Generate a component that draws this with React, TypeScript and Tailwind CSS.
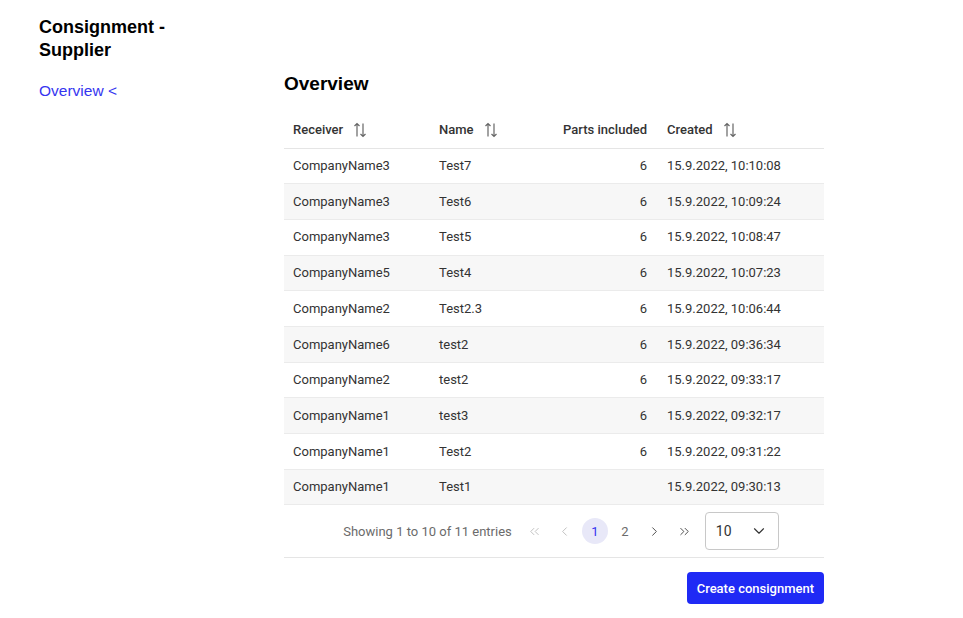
import { ChevronDown, ChevronLeft, ChevronRight, ChevronsLeft, ChevronsRight } from "lucide-react";

interface Row {
    receiver: string;
    name: string;
    parts: string;
    created: string;
}

const rows: Row[] = [
    { receiver: "CompanyName3", name: "Test7", parts: "6", created: "15.9.2022, 10:10:08" },
    { receiver: "CompanyName3", name: "Test6", parts: "6", created: "15.9.2022, 10:09:24" },
    { receiver: "CompanyName3", name: "Test5", parts: "6", created: "15.9.2022, 10:08:47" },
    { receiver: "CompanyName5", name: "Test4", parts: "6", created: "15.9.2022, 10:07:23" },
    { receiver: "CompanyName2", name: "Test2.3", parts: "6", created: "15.9.2022, 10:06:44" },
    { receiver: "CompanyName6", name: "test2", parts: "6", created: "15.9.2022, 09:36:34" },
    { receiver: "CompanyName2", name: "test2", parts: "6", created: "15.9.2022, 09:33:17" },
    { receiver: "CompanyName1", name: "test3", parts: "6", created: "15.9.2022, 09:32:17" },
    { receiver: "CompanyName1", name: "Test2", parts: "6", created: "15.9.2022, 09:31:22" },
    { receiver: "CompanyName1", name: "Test1", parts: "", created: "15.9.2022, 09:30:13" },
];

const SortIcon = () => (
    <svg width="16" height="16" viewBox="0 0 16 16" fill="none" stroke="#666" strokeWidth="1.2" className="ml-[9px] inline-block">
        <path d="M5 14.5V1.5M2.5 4L5 1.5 7.5 4" />
        <path d="M11 1.5v13M8.5 12L11 14.5 13.5 12" />
    </svg>
);

const App = () => {
    return (
        <div className="flex min-h-[618px] bg-white pl-[39px] font-['Roboto',sans-serif] text-[#333]">
            <aside className="w-[150px] shrink-0 pt-[16px]">
                <h1 className="font-['Liberation_Sans',Arial,sans-serif] text-[18px] font-bold leading-[23px] text-black">
                    Consignment - Supplier
                </h1>
                <a className="mt-[19px] block font-['Liberation_Sans',Arial,sans-serif] text-[15.5px] leading-[20px] text-[#3535f0]">
                    Overview &lt;
                </a>
            </aside>

            <main className="ml-[95px] w-[540px] pt-[70px]">
                <h2 className="font-['Liberation_Sans',Arial,sans-serif] text-[19px] font-bold leading-[28px] text-black">
                    Overview
                </h2>

                <table className="mt-[14px] w-full table-fixed border-collapse text-[13px]">
                    <colgroup>
                        <col className="w-[146px]" />
                        <col className="w-[110px]" />
                        <col className="w-[117px]" />
                        <col className="w-[167px]" />
                    </colgroup>
                    <thead>
                        <tr className="h-[36px] border-b border-[#e5e5e5]">
                            <th className="px-[9px] text-left font-medium">
                                <span className="inline-flex items-center">Receiver<SortIcon /></span>
                            </th>
                            <th className="px-[9px] text-left font-medium">
                                <span className="inline-flex items-center">Name<SortIcon /></span>
                            </th>
                            <th className="px-[10px] text-right font-medium">Parts included</th>
                            <th className="px-[10px] text-left font-medium">
                                <span className="inline-flex items-center">Created<SortIcon /></span>
                            </th>
                        </tr>
                    </thead>
                    <tbody>
                        {rows.map((r, i) => (
                            <tr key={i} className={`h-[35.7px] border-b border-[#ebebeb] ${i % 2 === 1 ? "bg-[#f7f7f7]" : "bg-white"}`}>
                                <td className="px-[9px]">{r.receiver}</td>
                                <td className="px-[9px]">{r.name}</td>
                                <td className="px-[10px] text-right">{r.parts}</td>
                                <td className="px-[10px]">{r.created}</td>
                            </tr>
                        ))}
                    </tbody>
                </table>

                <div className="flex h-[53px] items-center justify-center border-b border-[#e5e5e5] pl-[14px] text-[13px]">
                    <span className="mr-[8px] text-[#6b6b6b]">Showing 1 to 10 of 11 entries</span>
                    <div className="flex items-center">
                        <span className="flex h-[30px] w-[30px] items-center justify-center text-[#bdbdbd]">
                            <ChevronsLeft size={15} strokeWidth={1.5} />
                        </span>
                        <span className="flex h-[30px] w-[30px] items-center justify-center text-[#bdbdbd]">
                            <ChevronLeft size={15} strokeWidth={1.5} />
                        </span>
                        <span className="flex h-[30px] w-[30px] items-center justify-center">
                            <span className="flex h-[26px] w-[26px] items-center justify-center rounded-full bg-[#e8e8f8] text-[#3535f0]">1</span>
                        </span>
                        <span className="flex h-[30px] w-[30px] items-center justify-center text-[#6b6b6b]">2</span>
                        <span className="flex h-[30px] w-[30px] items-center justify-center text-[#444]">
                            <ChevronRight size={15} strokeWidth={1.5} />
                        </span>
                        <span className="flex h-[30px] w-[30px] items-center justify-center text-[#444]">
                            <ChevronsRight size={15} strokeWidth={1.5} />
                        </span>
                    </div>
                    <div className="ml-[5px] flex h-[38px] w-[74px] items-center justify-between rounded-[4px] border border-[#c8c8c8] pl-[10px] pr-[10px] text-[14px] text-[#333]">
                        <span>10</span>
                        <ChevronDown size={18} strokeWidth={1.5} />
                    </div>
                </div>

                <div className="mt-[14px] flex justify-end">
                    <button className="h-[32px] rounded-[4px] bg-[#1f2af5] px-[10px] text-[13px] font-medium text-white">
                        Create consignment
                    </button>
                </div>
            </main>
        </div>
    );
};

export default App;
